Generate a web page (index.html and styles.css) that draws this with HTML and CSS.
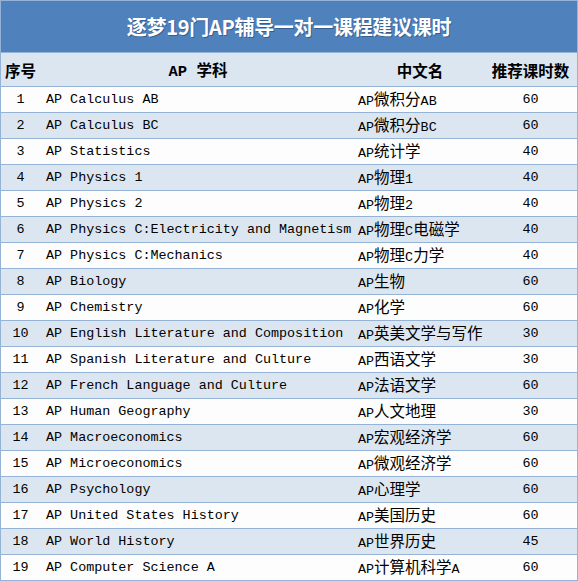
FILE: index.html
```html
<!DOCTYPE html>
<html lang="zh-CN">
<head>
<meta charset="utf-8">
<title>逐梦19门AP辅导一对一课程建议课时</title>
<link rel="stylesheet" href="styles.css">
</head>
<body>
<div class="sheet">
  <div class="title">逐梦19门AP辅导一对一课程建议课时</div>
  <div class="row head">
    <div class="c1">序号</div>
    <div class="c2">AP 学科</div>
    <div class="c3">中文名</div>
    <div class="c4">推荐课时数</div>
  </div>
  <div class="row"><div class="c1">1</div><div class="c2">AP Calculus AB</div><div class="c3">AP<span class="cn">微积分</span>AB</div><div class="c4">60</div></div>
  <div class="row alt"><div class="c1">2</div><div class="c2">AP Calculus BC</div><div class="c3">AP<span class="cn">微积分</span>BC</div><div class="c4">60</div></div>
  <div class="row"><div class="c1">3</div><div class="c2">AP Statistics</div><div class="c3">AP<span class="cn">统计学</span></div><div class="c4">40</div></div>
  <div class="row alt"><div class="c1">4</div><div class="c2">AP Physics 1</div><div class="c3">AP<span class="cn">物理</span>1</div><div class="c4">40</div></div>
  <div class="row"><div class="c1">5</div><div class="c2">AP Physics 2</div><div class="c3">AP<span class="cn">物理</span>2</div><div class="c4">40</div></div>
  <div class="row alt"><div class="c1">6</div><div class="c2">AP Physics C:Electricity and Magnetism</div><div class="c3">AP<span class="cn">物理</span>C<span class="cn">电磁学</span></div><div class="c4">40</div></div>
  <div class="row"><div class="c1">7</div><div class="c2">AP Physics C:Mechanics</div><div class="c3">AP<span class="cn">物理</span>C<span class="cn">力学</span></div><div class="c4">40</div></div>
  <div class="row alt"><div class="c1">8</div><div class="c2">AP Biology</div><div class="c3">AP<span class="cn">生物</span></div><div class="c4">60</div></div>
  <div class="row"><div class="c1">9</div><div class="c2">AP Chemistry</div><div class="c3">AP<span class="cn">化学</span></div><div class="c4">60</div></div>
  <div class="row alt"><div class="c1">10</div><div class="c2">AP English Literature and Composition</div><div class="c3">AP<span class="cn">英美文学与写作</span></div><div class="c4">30</div></div>
  <div class="row"><div class="c1">11</div><div class="c2">AP Spanish Literature and Culture</div><div class="c3">AP<span class="cn">西语文学</span></div><div class="c4">30</div></div>
  <div class="row alt"><div class="c1">12</div><div class="c2">AP French Language and Culture</div><div class="c3">AP<span class="cn">法语文学</span></div><div class="c4">60</div></div>
  <div class="row"><div class="c1">13</div><div class="c2">AP Human Geography</div><div class="c3">AP<span class="cn">人文地理</span></div><div class="c4">30</div></div>
  <div class="row alt"><div class="c1">14</div><div class="c2">AP Macroeconomics</div><div class="c3">AP<span class="cn">宏观经济学</span></div><div class="c4">60</div></div>
  <div class="row"><div class="c1">15</div><div class="c2">AP Microeconomics</div><div class="c3">AP<span class="cn">微观经济学</span></div><div class="c4">60</div></div>
  <div class="row alt"><div class="c1">16</div><div class="c2">AP Psychology</div><div class="c3">AP<span class="cn">心理学</span></div><div class="c4">60</div></div>
  <div class="row"><div class="c1">17</div><div class="c2">AP United States History</div><div class="c3">AP<span class="cn">美国历史</span></div><div class="c4">60</div></div>
  <div class="row alt"><div class="c1">18</div><div class="c2">AP World History</div><div class="c3">AP<span class="cn">世界历史</span></div><div class="c4">45</div></div>
  <div class="row"><div class="c1">19</div><div class="c2">AP Computer Science A</div><div class="c3">AP<span class="cn">计算机科学</span>A</div><div class="c4">60</div></div>
</div>
</body>
</html>
```
FILE: styles.css
```css
html, body {
  margin: 0;
  padding: 0;
  background: #ffffff;
}
.sheet {
  box-sizing: border-box;
  width: 578px;
  border: 1px solid #95b3d7;
  font-family: "Liberation Mono", "Noto Sans CJK SC", monospace;
  font-size: 13.4px;
  color: #000000;
}
.title {
  height: 51px;
  background: #4f81bd;
  color: #ffffff;
  font-family: "Noto Sans CJK SC", sans-serif;
  font-weight: bold;
  font-size: 20px;
  display: flex;
  align-items: center;
  justify-content: center;
  text-shadow: 1px 1px 0 rgba(40, 70, 110, 0.6);
  letter-spacing: -0.3px;
}
.row {
  display: grid;
  grid-template-columns: 39px 316px 128px 1fr;
  height: 25px;
  border-top: 1px solid #95b3d7;
  background: #fdfdfd;
  align-items: center;
  white-space: nowrap;
}
.row.alt {
  background: #dce6f1;
}
.row.head {
  height: 33px;
  background: #dce6f1;
  font-family: "Noto Sans CJK SC", sans-serif;
  font-weight: bold;
  font-size: 15.5px;
}
.row.head .c2 {
  font-family: "Liberation Mono", "Noto Sans CJK SC", monospace;
  text-align: center;
  padding-left: 0;
}
.row.head .c2 {
  font-size: 15.5px;
}
.row.head .c3 {
  text-align: center;
  padding-left: 0;
}
.c1 {
  text-align: center;
}
.c2 {
  padding-left: 6px;
}
.c3 {
  padding-left: 2px;
}
.c4 {
  text-align: center;
}
.cn {
  font-family: "Noto Sans CJK SC", sans-serif;
  font-size: 15.5px;
  line-height: 1;
}
```
